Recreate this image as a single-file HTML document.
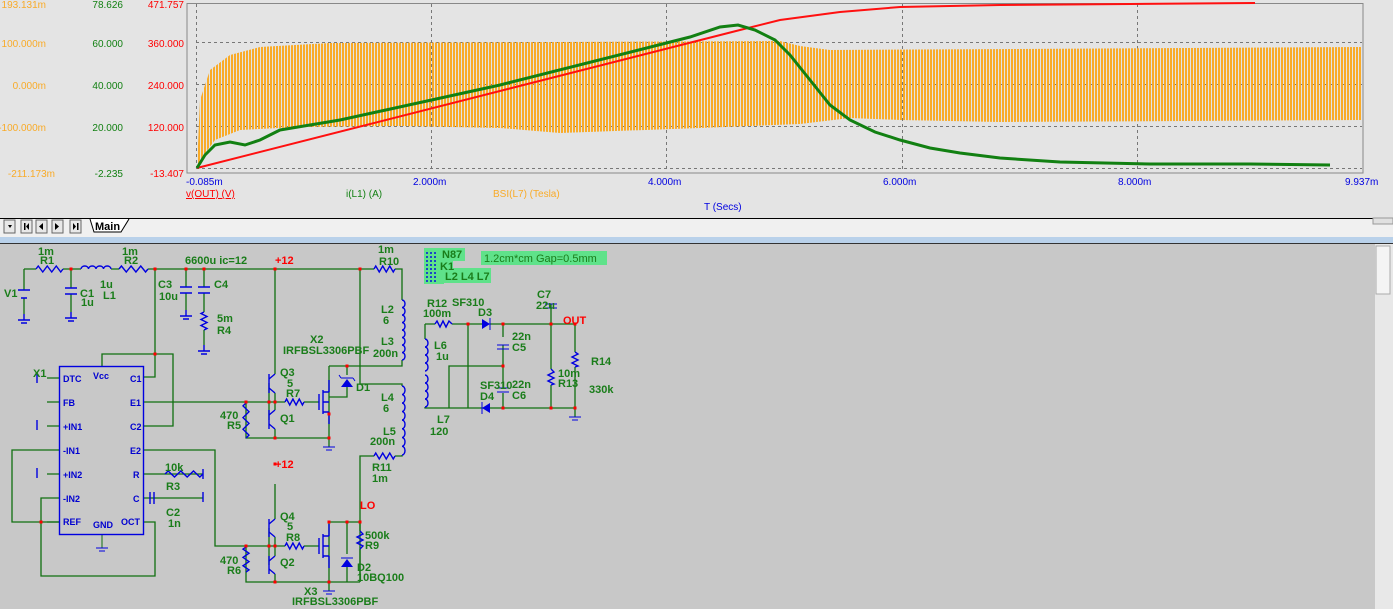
<!DOCTYPE html>
<html><head><meta charset="utf-8"><style>
html,body{margin:0;padding:0;width:1393px;height:609px;overflow:hidden;background:#e4e4e4}
svg{position:absolute;left:0;top:0}
.t{font-family:"Liberation Sans",sans-serif;font-size:10px}
.g{fill:#1a7d1a;font-family:"Liberation Sans",sans-serif;font-size:11px;font-weight:bold}
.b{fill:#0000d0;font-family:"Liberation Sans",sans-serif;font-size:9px;font-weight:bold}
.r{fill:#ff0000;font-family:"Liberation Sans",sans-serif;font-size:11px;font-weight:bold}
</style></head><body>
<svg id="s" width="1393" height="609" viewBox="0 0 1393 609">
<defs>
<pattern id="os" width="3" height="10" patternUnits="userSpaceOnUse"><rect x="0" y="0" width="2" height="10" fill="#f9ab28"/></pattern>
</defs>
<rect x="0" y="0" width="1393" height="218" fill="#e4e4e4"/>
<rect x="187" y="3.5" width="1176" height="169.5" fill="none" stroke="#888" stroke-width="1"/>
<g stroke="#777" stroke-dasharray="3,3" stroke-width="1">
<line x1="196" y1="42.5" x2="1362" y2="42.5"/><line x1="196" y1="84.5" x2="1362" y2="84.5"/>
<line x1="196" y1="126.5" x2="1362" y2="126.5"/><line x1="196" y1="168.5" x2="1362" y2="168.5"/>
<line x1="196.5" y1="4" x2="196.5" y2="172"/><line x1="431.5" y1="4" x2="431.5" y2="172"/>
<line x1="666.5" y1="4" x2="666.5" y2="172"/><line x1="902.5" y1="4" x2="902.5" y2="172"/>
<line x1="1137.5" y1="4" x2="1137.5" y2="172"/>
</g>
<polygon fill="url(#os)" points="197,168 200,100 210,70 230,55 260,47 330,43 780,41 800,46 830,50 1362,47 1362,120 1000,122 900,120 850,118 800,124 700,128 560,133 500,128 400,126 300,127 240,130 215,140 200,160"/>
<polyline fill="none" stroke="#ff1010" stroke-width="2" points="197,168 740,30 780,20 840,12 900,7 1000,5 1130,4 1255,3"/>
<polyline fill="none" stroke="#128012" stroke-width="3" points="197,168 205,155 215,145 230,142 245,145 260,140 280,130 310,125 340,120 500,85 690,37 720,27 738,25 755,30 775,40 790,55 810,80 830,105 850,120 875,132 900,140 930,148 960,153 1000,158 1060,162 1150,164 1250,164 1330,165"/>
<g class="t" text-anchor="end">
<text x="46" y="8" fill="#f9ab28">193.131m</text><text x="123" y="8" fill="#128012">78.626</text><text x="184" y="8" fill="#f00">471.757</text>
<text x="46" y="47" fill="#f9ab28">100.000m</text><text x="123" y="47" fill="#128012">60.000</text><text x="184" y="47" fill="#f00">360.000</text>
<text x="46" y="89" fill="#f9ab28">0.000m</text><text x="123" y="89" fill="#128012">40.000</text><text x="184" y="89" fill="#f00">240.000</text>
<text x="46" y="131" fill="#f9ab28">-100.000m</text><text x="123" y="131" fill="#128012">20.000</text><text x="184" y="131" fill="#f00">120.000</text>
<text x="55" y="177" fill="#f9ab28">-211.173m</text><text x="123" y="177" fill="#128012">-2.235</text><text x="184" y="177" fill="#f00">-13.407</text>
</g>
<g class="t" fill="#0000e0">
<text x="186" y="185">-0.085m</text><text x="413" y="185">2.000m</text><text x="648" y="185">4.000m</text>
<text x="883" y="185">6.000m</text><text x="1118" y="185">8.000m</text><text x="1345" y="185">9.937m</text>
<text x="704" y="210">T (Secs)</text>
</g>
<text class="t" x="186" y="197" fill="#f00" text-decoration="underline">v(OUT) (V)</text>
<text class="t" x="346" y="197" fill="#128012">i(L1) (A)</text>
<text class="t" x="493" y="197" fill="#f9ab28">BSI(L7) (Tesla)</text>
<rect x="0" y="218" width="1393" height="19" fill="#f0f0f0"/>
<line x1="0" y1="218.5" x2="1393" y2="218.5" stroke="#000"/>
<rect x="1373" y="218" width="20" height="6" fill="#e0e0e0" stroke="#999"/>
<g fill="#e8e8e8" stroke="#666">
<rect x="4" y="220" width="11" height="13"/><rect x="21" y="220" width="11" height="13"/><rect x="36" y="220" width="11" height="13"/><rect x="52" y="220" width="11" height="13"/><rect x="70" y="220" width="11" height="13"/>
</g>
<g fill="#000"><path d="M8 225h4l-2 3z"/><rect x="24" y="223" width="1.5" height="7"/><path d="M29 223v7l-3-3.5z"/><path d="M43 223v7l-4-3.5z"/><path d="M55 223v7l4-3.5z"/><path d="M73 223v7l3-3.5z"/><rect x="77" y="223" width="1.5" height="7"/></g>
<path d="M90 219 L94 232 L121 232 L129 219" fill="#fff" stroke="#000"/>
<text x="95" y="230" font-family="Liberation Sans,sans-serif" font-size="11" font-weight="bold">Main</text>
<rect x="0" y="237" width="1393" height="6" fill="#b9d1ea"/>
<line x1="0" y1="243.5" x2="1393" y2="243.5" stroke="#333"/>
<rect x="0" y="244" width="1375" height="365" fill="#c8c8c8"/>
<rect x="1375" y="244" width="18" height="365" fill="#e8e8e8"/>
<rect x="1376" y="246" width="14" height="48" fill="#f4f4f4" stroke="#aaa"/>
<rect x="424" y="248" width="20" height="36" fill="#5fe28a"/><rect x="444" y="248" width="21" height="13" fill="#5fe28a"/>
<rect x="444" y="261" width="9" height="10" fill="#5fe28a"/><rect x="443" y="268" width="48" height="15" fill="#5fe28a"/>
<rect x="481" y="251" width="126" height="14" fill="#5fe28a"/>
<g id="w" fill="none" stroke="#107010" stroke-width="1.3">
<path d="M24 269H36M63 269H81M111 269H119M148 269H374M395 269H402V300"/>
<path d="M24 269V290M24 298V314M71 269V288M71 294V312M186 269V287M186 293V310M204 269V287M204 293V312M204 330V345"/>
<path d="M155 269V377H143M102 366V354H173V426H143"/>
<path d="M143 402H269M246 402V438H329V447M47 378H59M47 402H59M47 426H59M47 450H59M47 474H59M47 498H59M47 522H59"/>
<path d="M47 450H12V522H59M47 498H41V576H155V522H143"/>
<path d="M143 450H215V546H269M143 474H165M165 474H203M143 498H165M152 498H203"/>
<path d="M275 269V374M275 393V410M275 429V438M329 366V438M329 366H402V360M347 366V375M347 387V397H329"/>
<path d="M360 269V384H402V386M402 455V456H395M374 456H360V582"/>
<path d="M269 383V420M269 402H285M304 402H319"/>
<path d="M275 484V519M275 537V556M275 574V582M246 546V582H360M329 522H360M329 522V591M347 522V554M347 567V582M360 522V531M360 549V582"/>
<path d="M269 528V565M269 546H285M304 546H319"/>
<path d="M425 324V339M425 324H435M452 324H482M490 324H575M468 324V408M425 407V408H449V366H503V345M503 324V337M503 366V388M503 393V408M431 408H575M551 324V304M551 310V369M551 385V408M575 324V352M575 367V417"/>
</g>
<g id="c" fill="none" stroke="#0000e0" stroke-width="1.4"></g>
<g fill="#f00" id="dots"></g>
<rect x="59.5" y="366.5" width="84" height="168" fill="none" stroke="#0000e0" stroke-width="1.4"/>
<g class="b">
<text x="63" y="382">DTC</text><text x="93" y="379">Vcc</text><text x="130" y="382">C1</text>
<text x="63" y="406">FB</text><text x="130" y="406">E1</text>
<text x="63" y="430">+IN1</text><text x="130" y="430">C2</text>
<text x="63" y="454">-IN1</text><text x="130" y="454">E2</text>
<text x="63" y="478">+IN2</text><text x="133" y="478">R</text>
<text x="63" y="502">-IN2</text><text x="133" y="502">C</text>
<text x="63" y="525">REF</text><text x="93" y="528">GND</text><text x="121" y="525">OCT</text>
</g>
<g class="g">
<text x="38" y="255">1m</text><text x="40" y="264">R1</text><text x="122" y="255">1m</text><text x="124" y="264">R2</text>
<text x="185" y="264">6600u ic=12</text><text x="378" y="253">1m</text><text x="379" y="265">R10</text>
<text x="4" y="297">V1</text><text x="80" y="297">C1</text><text x="81" y="306">1u</text>
<text x="100" y="288">1u</text><text x="103" y="299">L1</text>
<text x="158" y="288">C3</text><text x="159" y="300">10u</text><text x="214" y="288">C4</text>
<text x="217" y="322">5m</text><text x="217" y="334">R4</text>
<text x="33" y="377">X1</text>
<text x="310" y="343">X2</text><text x="283" y="354">IRFBSL3306PBF</text>
<text x="280" y="376">Q3</text><text x="287" y="387">5</text><text x="286" y="397">R7</text>
<text x="220" y="419">470</text><text x="227" y="429">R5</text><text x="280" y="422">Q1</text><text x="356" y="391">D1</text>
<text x="381" y="313">L2</text><text x="383" y="324">6</text><text x="381" y="345">L3</text><text x="373" y="357">200n</text>
<text x="381" y="401">L4</text><text x="383" y="412">6</text><text x="383" y="435">L5</text><text x="370" y="445">200n</text>
<text x="372" y="471">R11</text><text x="372" y="482">1m</text>
<text x="165" y="471">10k</text><text x="166" y="490">R3</text><text x="166" y="516">C2</text><text x="168" y="527">1n</text>
<text x="280" y="520">Q4</text><text x="287" y="530">5</text><text x="286" y="541">R8</text>
<text x="220" y="564">470</text><text x="227" y="574">R6</text><text x="280" y="566">Q2</text>
<text x="304" y="595">X3</text><text x="292" y="605">IRFBSL3306PBF</text>
<text x="365" y="539">500k</text><text x="365" y="549">R9</text><text x="357" y="571">D2</text><text x="357" y="581">10BQ100</text>
<text x="442" y="258">N87</text><text x="440" y="270">K1</text><text x="445" y="280">L2 L4 L7</text>
<text x="484" y="262" font-weight="normal">1.2cm*cm  Gap=0.5mm</text>
<text x="427" y="307">R12</text><text x="452" y="306">SF310</text><text x="423" y="317">100m</text><text x="478" y="316">D3</text>
<text x="537" y="298">C7</text><text x="536" y="309">22u</text>
<text x="512" y="340">22n</text><text x="512" y="351">C5</text><text x="591" y="365">R14</text>
<text x="558" y="377">10m</text><text x="558" y="387">R13</text><text x="589" y="393">330k</text>
<text x="480" y="389">SF310</text><text x="512" y="388">22n</text><text x="480" y="400">D4</text><text x="512" y="399">C6</text>
<text x="434" y="349">L6</text><text x="436" y="360">1u</text><text x="437" y="423">L7</text><text x="430" y="435">120</text>
</g>
<g class="r"><text x="275" y="264">+12</text><text x="275" y="468">+12</text><text x="360" y="509">LO</text><text x="563" y="324">OUT</text></g>
</svg>
<script>
var c=document.getElementById('c'),d=document.getElementById('dots'),h='';
function P(s){h+='<path d="'+s+'"/>';}
function rh(x1,x2,y){var n=6,s='M'+x1+' '+y,w=(x2-x1)/n;for(var i=0;i<n;i++)s+='L'+(x1+w*(i+.5))+' '+(y+(i%2?3:-3));s+='L'+x2+' '+y;P(s);}
function rv(x,y1,y2){var n=6,s='M'+x+' '+y1,w=(y2-y1)/n;for(var i=0;i<n;i++)s+='L'+(x+(i%2?3:-3))+' '+(y1+w*(i+.5));s+='L'+x+' '+y2;P(s);}
function cv(x,y1,y2){var s='M'+x+' '+y1,n=4,w=(y2-y1)/n;for(var i=0;i<n;i++){s+='a3 '+(w/2)+' 0 1 1 0 '+w;}P(s);}
function ch(x1,x2,y){var s='M'+x1+' '+y,n=4,w=(x2-x1)/n;for(var i=0;i<n;i++){s+='a'+(w/2)+' 3 0 1 1 '+w+' 0';}P(s);}
function capv(x,y){P('M'+(x-6)+' '+y+'H'+(x+6)+'M'+(x-6)+' '+(y+6)+'H'+(x+6));}
function gnd(x,y){P('M'+x+' '+y+'v6M'+(x-6)+' '+(y+6)+'h12M'+(x-3)+' '+(y+9)+'h6');}
rh(36,63,269);ch(81,111,269);rh(119,148,269);rh(374,395,269);
P('M18 290H30M21 298H27');gnd(24,314);capv(71,288);gnd(71,312);capv(186,287);gnd(186,310);capv(204,287);rv(204,312,330);gnd(204,345);
cv(402,300,330);cv(402,330,360);cv(402,386,420);cv(402,420,455);rh(374,395,456);
rv(246,403,438);rv(246,547,572);rh(285,304,402);rh(285,304,546);rh(165,203,474);
P('M150 492V504M154 492V504');P('M203 469v10M203 492v10M37 373v10M37 420v10M37 468v10');
function q(y1,y2){P('M269 '+y1+'V'+y2);}
q(374,393);q(410,429);q(519,537);q(556,574);
P('M269 379L275 374M269 388L275 393M269 415L275 410M269 424L275 429M269 524L275 519M269 532L275 537M269 561L275 556M269 569L275 574');
function m(y){P('M319 '+(y-8)+'V'+(y+8)+'M323 '+(y-12)+'V'+(y+12)+'M323 '+(y-10)+'H329M323 '+y+'H329M323 '+(y+10)+'H329M329 '+(y-22)+'V'+(y-10)+'M329 '+(y+10)+'V'+(y+22));}
m(402);m(546);
c.innerHTML=h;
var f='';
f+='<path d="M341 387h12l-6-8z" fill="#0000e0"/><path d="M341 378h12M341 378l-2-3M353 378l2 3" stroke="#0000e0" fill="none"/>';
f+='<path d="M341 567h12l-6-8z" fill="#0000e0"/><path d="M341 558h12" stroke="#0000e0"/>';
f+='<path d="M482 319v10l8-5z" fill="#0000e0"/><path d="M490 318v12" stroke="#0000e0"/>';
f+='<path d="M490 403v10l-8-5z" fill="#0000e0"/><path d="M482 402v12" stroke="#0000e0"/>';
f+='<path d="M497 345h12M497 349h12M497 388h12M497 392h12M545 304h12M545 308h12" stroke="#0000e0" fill="none"/>';
f+='<g fill="none" stroke="#0000e0" stroke-width="1.4"><path d="M425 339a3 4 0 1 1 0 8a3 4 0 1 1 0 8a3 4 0 1 1 0 8a3 4 0 1 1 0 8M425 375a3 4 0 1 1 0 8a3 4 0 1 1 0 8a3 4 0 1 1 0 8a3 4 0 1 1 0 8"/>';
f+='<path d="M551 369l3 3l-6 3l6 3l-6 3l6 3l-3 1M575 352l3 2l-6 3l6 3l-6 3l6 3l-3 1M435 324l2-3l3 6l3-6l3 6l3-6l3 3"/>';
f+='<path d="M360 531l3 3l-6 3l6 3l-6 3l6 3l-3 3"/><path d="M427 252v30M431 252v30M435 252v30" stroke-dasharray="2,2"/></g>';
f+='<g stroke="#107010" fill="none"><path d="M102 534v14"/></g>';
f+='<g stroke="#0000e0" fill="none"><path d="M323 447h12M326 450h6M323 591h12M326 594h6M569 417h12M572 420h6M96 548h12M99 551h6"/></g>';
var pts=[[71,269],[155,269],[186,269],[204,269],[275,269],[360,269],[155,354],[246,402],[269,402],[275,402],[329,438],[275,438],[329,414],[347,366],[246,546],[269,546],[275,546],[329,582],[275,582],[347,522],[360,522],[329,522],[468,324],[503,324],[551,324],[575,324],[503,366],[503,408],[551,408],[575,408],[41,522],[275,464]];
pts.forEach(function(p){f+='<rect x="'+(p[0]-1.5)+'" y="'+(p[1]-1.5)+'" width="3" height="3" fill="#f00"/>';});
d.innerHTML=f;
</script>
</body></html>
